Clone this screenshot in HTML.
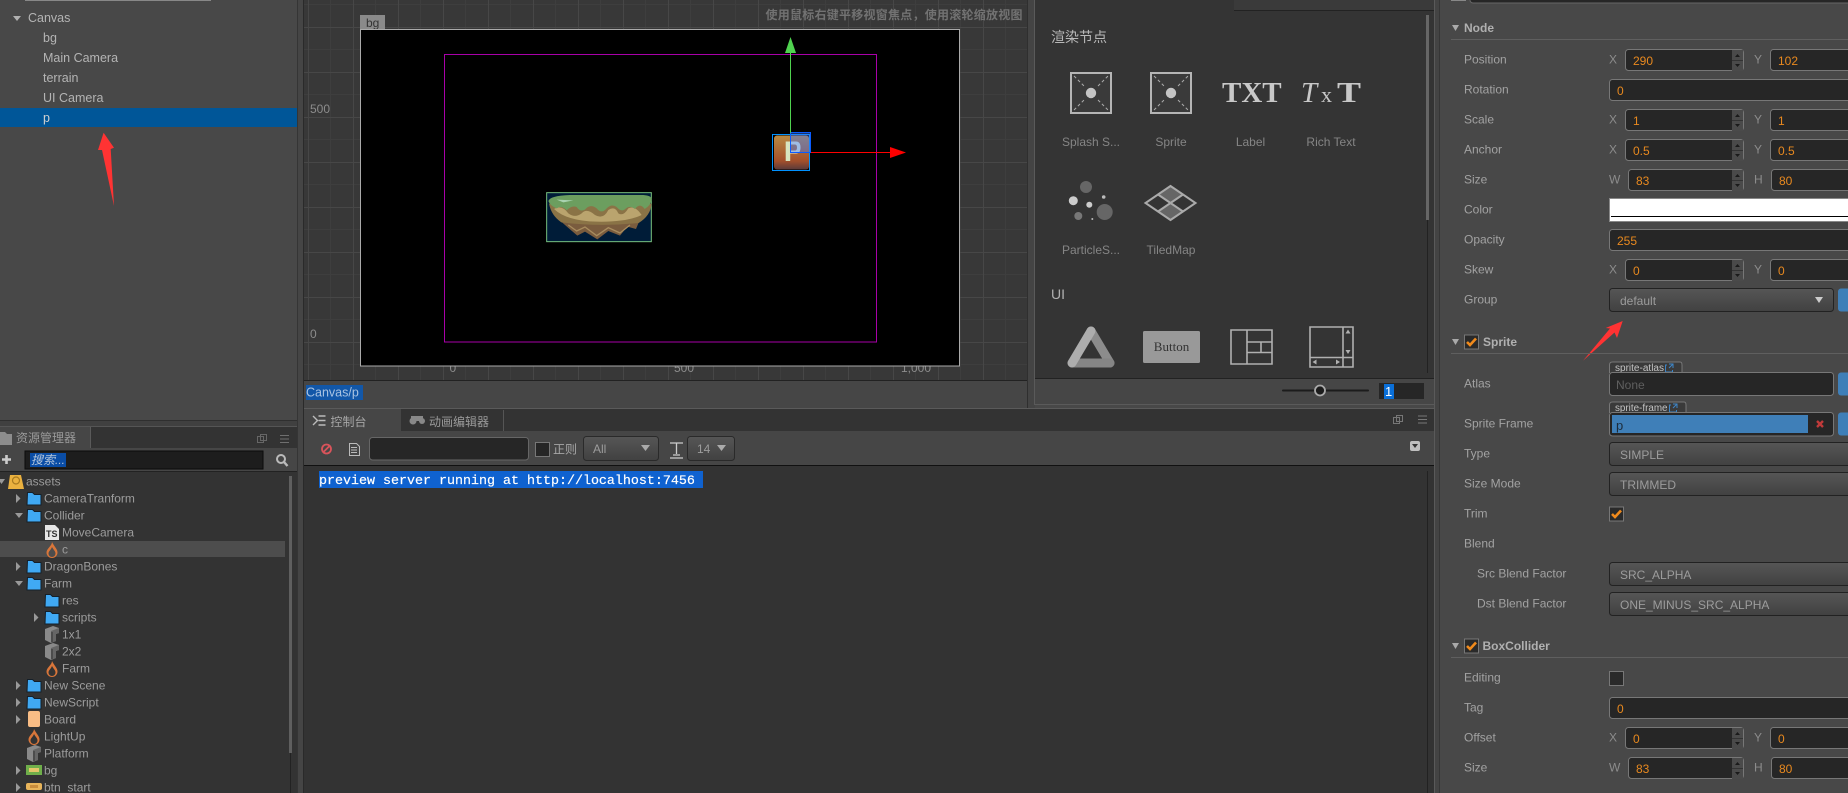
<!DOCTYPE html>
<html lang="zh"><head><meta charset="utf-8"><title>Cocos Creator</title>
<style>
html,body{margin:0;padding:0;background:#484848;width:1848px;height:793px;overflow:hidden}
svg{display:block;font-family:"Liberation Sans","Noto Sans CJK SC",sans-serif;font-size:12px}
.h{font-size:12.5px;fill:#b4b4b4}
.t{fill:#9c9c9c;transform:translateY(-.5px)}
.l{fill:#a2a2a2;transform:translateY(-.5px)}
.o{fill:#e8891f}
.s{fill:#9c9c9c}
.m{fill:#858585;text-anchor:middle}
.b{font-weight:bold;fill:#b0b0b0}
.r{fill:#8c8c8c;transform:translateY(-.5px)}
.c{shape-rendering:crispEdges}
</style></head><body>
<svg width="1848" height="793" viewBox="0 0 1848 793" xmlns="http://www.w3.org/2000/svg">
<defs>
<pattern id="grid" patternUnits="userSpaceOnUse" x="443" y="27" width="45" height="45">
<rect width="45" height="45" fill="#383838"/>
<rect x="22" width="1" height="45" fill="#3e3e3e"/><rect y="22" width="45" height="1" fill="#3e3e3e"/>
<rect width="1" height="45" fill="#474747"/><rect width="45" height="1" fill="#474747"/>
</pattern>
<linearGradient id="sel" x1="0" y1="0" x2="0" y2="1"><stop offset="0" stop-color="#565656"/><stop offset="1" stop-color="#414141"/></linearGradient>
<linearGradient id="brown" x1="0" y1="0" x2="0" y2="1"><stop offset="0" stop-color="#b98a42"/><stop offset=".75" stop-color="#a34f2b"/><stop offset="1" stop-color="#5a3a3a"/></linearGradient>
<symbol id="folder" width="16" height="14" overflow="visible"><path d="M.5 .5h5l2 2h6.500v10.500h-14z" fill="#40a9f3" stroke="#15202a"/></symbol>
<symbol id="fire" width="14" height="18" overflow="visible"><path d="M7 1C7 5 1.500 7.500 1.500 11.500a5.500 5.500 0 0 0 11 0C12.500 8 9.500 6 7 1z M7 6C6 9 3.500 10 3.500 12.500a3.500 3.500 0 0 0 7 0C10.500 10 8.500 9 7 6z" fill="#d9763a" fill-rule="evenodd"/></symbol>
<symbol id="cube" width="15" height="17" overflow="visible"><path d="M0 3L8 0L14 2V7L11 8V15L6 17L0 14z" fill="#8a8a8a"/><path d="M6 5L14 2V7L11 8V15L6 17z" fill="#666"/><path d="M7 6V16" stroke="#333"/></symbol>
<symbol id="spin" width="12" height="21" overflow="visible"><rect x="0" y="0" width="11" height="21" fill="#4a4a4a"/><rect x="0" y="10" width="11" height="1" fill="#333"/><path d="M3 7l2.500-3 2.500 3z M3 14l2.500 3 2.500-3z" fill="#1a1a1a"/></symbol>
<symbol id="chk" width="16" height="16" overflow="visible"><rect x=".5" y=".5" width="14" height="14" fill="#2a2a2a" stroke="#777"/><path d="M3 7.500l3 3L12 4" fill="none" stroke="#f08a1c" stroke-width="2.600"/></symbol>
<symbol id="ph" width="44" height="44" overflow="visible"><rect x="1" y="1" width="40" height="40" fill="#3a3a3a" stroke="#b5b5b5" stroke-width="2"/><circle cx="21" cy="21" r="5.200" fill="#c4c4c4"/><path d="M4 4L14 14M28 14L38 4M4 38L14 28M28 28L38 38" stroke="#aaa" stroke-dasharray="3 2.500"/></symbol>
</defs>

<!-- Hierarchy -->
<rect class="c" x="0" y="0" width="297" height="420" fill="#484848"/>
<rect class="c" x="25" y="0" width="186" height="1" fill="#888"/>
<path d="M13 16h8l-4 5z" fill="#b0b0b0"/>
<text class="h" x="28" y="22">Canvas</text>
<text class="h" x="43" y="42">bg</text>
<text class="h" x="43" y="62">Main Camera</text>
<text class="h" x="43" y="82">terrain</text>
<text class="h" x="43" y="102">UI Camera</text>
<rect class="c" x="0" y="108" width="297" height="19" fill="#005698"/>
<text class="h" x="43" y="122" style="fill:#d0d0d0">p</text>
<path d="M103.600 132.700L114 147.700L110.700 149L114 206L102 150L98 150z" fill="#ff3333"/>

<!-- Dividers -->
<rect class="c" x="297" y="0" width="7" height="793" fill="#454545"/>
<rect class="c" x="297" y="0" width="1" height="793" fill="#353535"/>
<rect class="c" x="303" y="0" width="1" height="793" fill="#2a2a2a"/>
<rect class="c" x="0" y="420" width="297" height="1" fill="#2f2f2f"/>
<rect class="c" x="0" y="421" width="297" height="5" fill="#404040"/>

<!-- Scene -->
<rect class="c" x="304" y="0" width="723" height="380" fill="url(#grid)"/>
<text x="310" y="113" fill="#8c8c8c">500</text>
<text x="310" y="338" fill="#8c8c8c">0</text>
<text x="449.500" y="372" fill="#8c8c8c">0</text>
<text x="674" y="372" fill="#8c8c8c">500</text>
<text x="901" y="372" fill="#8c8c8c">1,000</text>
<rect class="c" x="360" y="15" width="25" height="15" fill="#8a8a8a"/>
<text x="366" y="27" fill="#333">bg</text>
<rect class="c" x="360.500" y="29.500" width="599" height="336.500" fill="#000" stroke="#aaa"/>
<rect class="c" x="444.500" y="54.500" width="432" height="287.500" fill="none" stroke="#a800a8"/>
<text x="765.500" y="19" font-weight="bold" fill="#727272" textLength="257">使用鼠标右键平移视窗焦点，使用滚轮缩放视图</text>

<!-- Island -->
<g transform="translate(540 185) scale(.3333)">
<rect x="20" y="23" width="314" height="147" fill="#001c38" stroke="#77c07f" stroke-width="3"/>
<path d="M58 105L298 108L288 132L262 125L240 152L205 138L172 163L135 140L112 152L84 128z" fill="#7a5c3e"/>
<path d="M85 120L110 138L135 126L170 152L205 128L240 144L270 120" fill="none" stroke="#a88c5e" stroke-width="4"/>
<path d="M27 56L335 56Q332 92 296 114Q180 126 64 112Q34 92 27 56z" fill="#8a7346"/>
<path d="M42 72Q65 58 85 85Q105 100 125 85Q140 68 165 90Q190 105 205 75Q225 62 235 85Q250 95 265 70Q285 60 305 90Q260 112 170 110Q80 108 42 72z" fill="#baa46e"/>
<path d="M25 48Q30 32 90 30L310 30Q336 32 335 44Q332 62 314 72Q300 52 285 72Q270 60 258 70Q245 84 230 66Q215 55 200 70Q185 88 170 70Q150 55 135 74Q120 82 110 66Q95 60 80 76Q65 60 50 70Q30 62 25 48z" fill="#6c9e5f"/>
<path d="M50 44L100 46L70 52z" fill="#a9d3b0"/>
</g>

<!-- P sprite -->
<rect x="774" y="135.500" width="35" height="34" rx="3" fill="url(#brown)"/>
<path d="M785.700 141.500h4.500v19.500h-4.500z" fill="#d8e6bf"/>
<path d="M790 141.500h6q4.500 0 4.500 6t-4.500 6h-6v-3h5q2 0 2-3t-2-3h-5z" fill="#e6efd0"/>
<rect class="c" x="772.500" y="134.500" width="37" height="36" fill="none" stroke="#0091ff"/>
<rect class="c" x="790.500" y="132.500" width="20" height="20" fill="#3c78ff" fill-opacity=".42" stroke="#0a5cff"/>
<rect class="c" x="790" y="50" width="1" height="83" fill="#4fd24f"/>
<path d="M790.500 37L796 53H785z" fill="#4fd24f"/>
<rect class="c" x="811" y="152" width="80" height="1" fill="#f00"/>
<path d="M890 147L906 152.500L890 158z" fill="#f00"/>

<rect class="c" x="304" y="380" width="723" height="1" fill="#222"/>
<rect class="c" x="304" y="381" width="730" height="27" fill="#464646"/>
<rect class="c" x="306" y="385" width="57" height="15" fill="#1257a8"/>
<text x="306" y="396.500" font-size="12.500" fill="#a9c3e2">Canvas/p</text>

<!-- Node library -->
<rect class="c" x="1027" y="0" width="8" height="408" fill="#444"/>
<rect class="c" x="1027" y="0" width="1" height="408" fill="#2f2f2f"/>
<rect class="c" x="1034" y="0" width="1" height="405" fill="#5a5a5a"/>
<rect class="c" x="1035" y="0" width="399" height="378" fill="#343434"/>
<rect class="c" x="1234" y="0" width="200" height="10" fill="#3a3a3a"/>
<rect class="c" x="1234" y="10" width="200" height="1" fill="#222"/>
<rect class="c" x="1035" y="378" width="399" height="26" fill="#464646"/>
<rect class="c" x="1035" y="378" width="399" height="1" fill="#222"/>
<rect class="c" x="1034" y="404" width="401" height="1" fill="#5a5a5a"/>
<rect class="c" x="1427" y="220" width="1" height="153" fill="#222"/>
<rect class="c" x="1426" y="15" width="3" height="205" fill="#666"/>
<text x="1051" y="42" font-size="14" fill="#b8b8b8">渲染节点</text>
<use href="#ph" x="1070" y="72"/>
<use href="#ph" x="1150" y="72"/>
<text x="1222" y="102" font-family="'Liberation Serif',serif" font-weight="bold" font-size="29" fill="#c8c8c8">TXT</text>
<text x="1301" y="102" font-family="'Liberation Serif',serif" font-style="italic" font-size="29" fill="#c8c8c8">T</text>
<text x="1321" y="102" font-family="'Liberation Serif',serif" font-size="22" fill="#c8c8c8">x</text>
<text x="1337" y="102" font-family="'Liberation Serif',serif" font-weight="bold" font-size="29" fill="#c8c8c8" textLength="24" lengthAdjust="spacingAndGlyphs">T</text>
<text class="m" x="1091" y="146">Splash S...</text>
<text class="m" x="1171" y="146">Sprite</text>
<text class="m" x="1250.500" y="146">Label</text>
<text class="m" x="1331" y="146">Rich Text</text>
<g>
<circle cx="1086" cy="187" r="6" fill="#666"/>
<circle cx="1073.300" cy="200.700" r="4.500" fill="#ccc"/>
<circle cx="1089.300" cy="204.700" r="3" fill="#ccc"/>
<circle cx="1103.700" cy="197" r="1.800" fill="#bbb"/>
<circle cx="1104.700" cy="212" r="8" fill="#666"/>
<circle cx="1078.300" cy="216" r="4" fill="#777"/>
<circle cx="1092.300" cy="219" r="1" fill="#bbb"/>
</g>
<path d="M1170.500 186L1182.500 194.500L1170.500 203L1158.500 194.500z M1170.500 203L1182.500 211.500L1170.500 220L1158.500 211.500z" fill="#666"/>
<path d="M1170.500 186L1195.500 203L1170.500 220L1145.500 203zM1158 194.500L1183 211.500M1183 194.500L1158 211.500" fill="none" stroke="#aaa" stroke-width="2"/>
<text class="m" x="1091" y="254">ParticleS...</text>
<text class="m" x="1171" y="254">TiledMap</text>
<text x="1051" y="299" font-size="14" fill="#b0b0b0">UI</text>
<path d="M1091 331L1110 363" stroke="#8c8c8c" stroke-width="9" stroke-linecap="round"/>
<path d="M1072 363L1110 363" stroke="#858585" stroke-width="9" stroke-linecap="round"/>
<path d="M1091 331L1072 363" stroke="#adadad" stroke-width="9" stroke-linecap="round"/>
<rect x="1143" y="331" width="57" height="32" rx="1.500" fill="#999"/>
<text x="1171.500" y="351" text-anchor="middle" font-family="'Liberation Serif',serif" font-size="13" fill="#333">Button</text>
<path d="M1231 330H1272V364H1231zM1247 330V364M1247 342H1272M1247 352.500H1272M1261 342V352.500" fill="none" stroke="#b0b0b0" stroke-width="1.600"/>
<path d="M1310 327H1353V367H1310zM1343 327V367M1310 357.500H1353" fill="none" stroke="#b0b0b0" stroke-width="1.600"/>
<path d="M1348 329.500l2.500 4h-5zM1348 354l2.500-4h-5zM1312.500 362l4-2.500v5zM1340 362l-4-2.500v5z" fill="#b0b0b0"/>
<!-- Zoom slider -->
<rect x="1282" y="389.500" width="87" height="2" rx="1" fill="#1c1c1c"/>
<circle cx="1320" cy="390.500" r="5" fill="#1c1c1c" stroke="#aaa" stroke-width="1.800"/>
<rect class="c" x="1379" y="383" width="45" height="16" fill="#262626"/>
<rect class="c" x="1384" y="384" width="10" height="15" fill="#0a6fd8"/>
<text x="1385" y="396" font-size="13" fill="#fff">1</text>

<!-- Assets panel -->
<rect class="c" x="0" y="426" width="297" height="22" fill="#333"/>
<rect class="c" x="0" y="426" width="297" height="1" fill="#555"/>
<rect class="c" x="0" y="427" width="90" height="21" fill="#464646"/>
<rect class="c" x="90" y="427" width="1" height="21" fill="#5a5a5a"/>
<path d="M0 432H5L7 434H12V445H0z" fill="#8d8d8d"/>
<text x="16" y="442" fill="#9a9a9a">资源管理器</text>
<path d="M257.500 436.500h6v6h-6z M260.500 434.500h6v6h-6z" fill="none" stroke="#666"/>
<path d="M280 435.500h9M280 439h9M280 442.500h9" stroke="#6f6f6f"/>
<rect class="c" x="0" y="448" width="297" height="23" fill="#464646"/>
<path d="M2 459.500h9M6.500 455v9" stroke="#ccc" stroke-width="2.600"/>
<rect class="c" x="25" y="451" width="238" height="18" fill="#1d1d1d" stroke="#0b0b0b"/>
<rect class="c" x="30" y="453" width="36" height="14" fill="#0a4da6"/>
<text x="31" y="464" font-style="italic" fill="#b4c6dc">搜索...</text>
<circle cx="281" cy="459" r="4" fill="none" stroke="#bbb" stroke-width="2"/>
<path d="M284 462l3.500 4" stroke="#bbb" stroke-width="2.400"/>
<rect class="c" x="0" y="471" width="297" height="322" fill="#333"/>
<rect class="c" x="0" y="471" width="297" height="1" fill="#222"/>
<rect class="c" x="0" y="541" width="285" height="16" fill="#4d4d4d"/>
<rect class="c" x="290" y="476" width="1" height="317" fill="#222"/>
<rect class="c" x="289" y="476" width="3" height="277" fill="#5f5f5f"/>

<path d="M-2 479h7l-3.500 5z" fill="#999"/>
<path d="M10 475L21 475L24 489H8z" fill="#eab13f"/><circle cx="16" cy="480.500" r="3.500" fill="#eab13f" stroke="#a87a20" stroke-width="1.200"/>
<text class="t" x="26" y="486">assets</text>
<path d="M16 494l4.500 4.500L16 503z" fill="#999"/><use href="#folder" x="27" y="492"/><text class="t" x="44" y="503">CameraTranform</text>
<path d="M15 513h8l-4 5z" fill="#999"/><use href="#folder" x="27" y="509"/><text class="t" x="44" y="520">Collider</text>
<path d="M45 525h10l4 4v11H45z" fill="#e6e6e6"/><text x="46" y="537" font-size="9" font-weight="bold" fill="#333">TS</text><text class="t" x="62" y="537">MoveCamera</text>
<use href="#fire" x="45" y="541"/><text class="t" x="62" y="554">c</text>
<path d="M16 562l4.500 4.500L16 571z" fill="#999"/><use href="#folder" x="27" y="560"/><text class="t" x="44" y="571">DragonBones</text>
<path d="M15 581h8l-4 5z" fill="#999"/><use href="#folder" x="27" y="577"/><text class="t" x="44" y="588">Farm</text>
<use href="#folder" x="45" y="594"/><text class="t" x="62" y="605">res</text>
<path d="M34 613l4.500 4.500L34 622z" fill="#999"/><use href="#folder" x="45" y="611"/><text class="t" x="62" y="622">scripts</text>
<use href="#cube" x="45" y="626"/><text class="t" x="62" y="639">1x1</text>
<use href="#cube" x="45" y="643"/><text class="t" x="62" y="656">2x2</text>
<use href="#fire" x="45" y="660"/><text class="t" x="62" y="673">Farm</text>
<path d="M16 681l4.500 4.500L16 690z" fill="#999"/><use href="#folder" x="27" y="679"/><text class="t" x="44" y="690">New Scene</text>
<path d="M16 698l4.500 4.500L16 707z" fill="#999"/><use href="#folder" x="27" y="696"/><text class="t" x="44" y="707">NewScript</text>
<path d="M16 715l4.500 4.500L16 724z" fill="#999"/><rect x="28" y="711" width="12" height="16" rx="2" fill="#f9bd85"/><text class="t" x="44" y="724">Board</text>
<use href="#fire" x="27" y="728"/><text class="t" x="44" y="741">LightUp</text>
<use href="#cube" x="27" y="745"/><text class="t" x="44" y="758">Platform</text>
<path d="M16 766l4.500 4.500L16 775z" fill="#999"/><rect x="26" y="765" width="16" height="10" fill="#6fae4a"/><rect x="29" y="768" width="10" height="4" fill="#e4c66a"/><text class="t" x="44" y="775">bg</text>
<path d="M16 783l4.500 4.500L16 792z" fill="#999"/><rect x="26" y="783" width="16" height="7" rx="2" fill="#e8b45a"/><rect x="30" y="785" width="8" height="3" fill="#c98d3c"/><text class="t" x="44" y="792">btn_start</text>

<!-- Console -->
<rect class="c" x="304" y="408" width="1130" height="23" fill="#333"/>
<rect class="c" x="304" y="408" width="1130" height="1" fill="#5a5a5a"/>
<rect class="c" x="304" y="409" width="97" height="22" fill="#464646"/>
<rect class="c" x="401" y="410" width="102" height="21" fill="#333"/>
<rect class="c" x="503" y="410" width="1" height="21" fill="#555"/>
<path d="M313 416l4.500 4.500L313 425" fill="none" stroke="#bbb" stroke-width="1.400"/>
<path d="M318.500 416h7M318.500 420.500h7M318.500 425h7" stroke="#bbb" stroke-width="1.400"/>
<text x="330.500" y="426" fill="#a6a6a6">控制台</text>
<circle cx="413" cy="421" r="3.500" fill="#888"/><circle cx="422" cy="421" r="3" fill="#888"/><rect x="411" y="416" width="12" height="5" fill="#888"/>
<text x="429" y="426" fill="#9a9a9a">动画编辑器</text>
<path d="M1393.500 417.500h6v6h-6z M1396.500 415.500h6v6h-6z" fill="none" stroke="#777"/>
<path d="M1418 416h9M1418 419.500h9M1418 423h9" stroke="#777"/>
<rect class="c" x="304" y="431" width="1130" height="34" fill="#464646"/>
<circle cx="326.500" cy="449" r="4.500" fill="none" stroke="#d9545b" stroke-width="1.800"/>
<path d="M323.500 452l6-6" stroke="#d9545b" stroke-width="1.800"/>
<path d="M349.500 443.500h7l3 3v9h-10z" fill="none" stroke="#bbb"/><path d="M351 447.500h6M351 450h6M351 452.500h6" stroke="#bbb"/>
<rect x="369.500" y="437.500" width="159" height="22.500" rx="3" fill="#262626" stroke="#666"/>
<rect class="c" x="535.500" y="442.500" width="14" height="14" fill="#262626" stroke="#777"/>
<text x="553" y="453.500" fill="#a6a6a6">正则</text>
<rect x="583.500" y="436.500" width="75" height="24" rx="3" fill="url(#sel)" stroke="#2a2a2a"/>
<text class="s" x="593" y="453">All</text>
<path d="M641 445h9l-4.500 6z" fill="#aaa"/>
<path d="M670 443h13M676.500 443v11M673 455h7M670 458h13" fill="none" stroke="#ccc" stroke-width="1.300"/>
<rect x="687.500" y="436.500" width="47" height="24" rx="3" fill="url(#sel)" stroke="#2a2a2a"/>
<text class="s" x="697" y="453">14</text>
<path d="M717 445h9l-4.500 6z" fill="#aaa"/>
<rect x="1410" y="441" width="10" height="10" rx="2" fill="#bfbfbf"/><path d="M1412 444h6l-3 4z" fill="#333"/>
<rect class="c" x="304" y="465" width="1130" height="328" fill="#333"/>
<rect class="c" x="304" y="465" width="1130" height="1" fill="#111"/>
<rect class="c" x="1427" y="471" width="1" height="322" fill="#222"/>
<rect class="c" x="319" y="471" width="384" height="17" fill="#0f62d0"/>
<text x="319" y="484" font-family="'Liberation Mono',monospace" font-size="13.330" fill="#fff" stroke="#fff" stroke-width=".2">preview server running at http://localhost:7456</text>

<!-- Inspector -->
<rect class="c" x="1434" y="0" width="6" height="793" fill="#444"/>
<rect class="c" x="1434" y="0" width="1" height="793" fill="#5a5a5a"/>
<rect class="c" x="1439" y="0" width="1" height="793" fill="#363636"/>
<rect class="c" x="1440" y="0" width="408" height="793" fill="#484848"/>
<rect class="c" x="1451" y="0" width="15" height="1" fill="#888"/>
<rect x="1470" y="-20" width="400" height="23" rx="3" fill="#262626" stroke="#666"/>
<path d="M1452 25h7l-3.500 6z" fill="#aaa"/>
<text class="b" x="1464" y="32">Node</text>
<rect class="c" x="1451" y="39" width="397" height="1" fill="#5f5f5f"/>

<text class="l" x="1464" y="64">Position</text>
<text class="l" x="1464" y="94">Rotation</text>
<text class="l" x="1464" y="124">Scale</text>
<text class="l" x="1464" y="154">Anchor</text>
<text class="l" x="1464" y="184">Size</text>
<text class="l" x="1464" y="214">Color</text>
<text class="l" x="1464" y="244">Opacity</text>
<text class="l" x="1464" y="274">Skew</text>
<text class="l" x="1464" y="304">Group</text>

<text class="r" x="1609" y="64">X</text>
<rect x="1625.500" y="49.500" width="118" height="21" rx="3" fill="#262626" stroke="#777"/><use href="#spin" x="1732" y="50"/>
<text class="o" x="1633" y="65">290</text>
<text class="r" x="1754" y="64">Y</text>
<rect x="1770.500" y="49.500" width="118" height="21" rx="3" fill="#262626" stroke="#777"/>
<text class="o" x="1778" y="65">102</text>

<rect x="1609.500" y="79.500" width="280" height="21" rx="3" fill="#262626" stroke="#777"/>
<text class="o" x="1617" y="95">0</text>

<text class="r" x="1609" y="124">X</text>
<rect x="1625.500" y="109.500" width="118" height="21" rx="3" fill="#262626" stroke="#777"/><use href="#spin" x="1732" y="110"/>
<text class="o" x="1633" y="125">1</text>
<text class="r" x="1754" y="124">Y</text>
<rect x="1770.500" y="109.500" width="118" height="21" rx="3" fill="#262626" stroke="#777"/>
<text class="o" x="1778" y="125">1</text>

<text class="r" x="1609" y="154">X</text>
<rect x="1625.500" y="139.500" width="118" height="21" rx="3" fill="#262626" stroke="#777"/><use href="#spin" x="1732" y="140"/>
<text class="o" x="1633" y="155">0.5</text>
<text class="r" x="1754" y="154">Y</text>
<rect x="1770.500" y="139.500" width="118" height="21" rx="3" fill="#262626" stroke="#777"/>
<text class="o" x="1778" y="155">0.5</text>

<text class="r" x="1609" y="184">W</text>
<rect x="1628.500" y="169.500" width="115" height="21" rx="3" fill="#262626" stroke="#777"/><use href="#spin" x="1732" y="170"/>
<text class="o" x="1636" y="185">83</text>
<text class="r" x="1754" y="184">H</text>
<rect x="1771.500" y="169.500" width="118" height="21" rx="3" fill="#262626" stroke="#777"/>
<text class="o" x="1779" y="185">80</text>

<rect class="c" x="1609.500" y="198.500" width="260" height="23" fill="#fff" stroke="#888"/>
<rect class="c" x="1611" y="216" width="250" height="1" fill="#000"/>

<rect x="1609.500" y="229.500" width="280" height="21" rx="3" fill="#262626" stroke="#777"/>
<text class="o" x="1617" y="245">255</text>

<text class="r" x="1609" y="274">X</text>
<rect x="1625.500" y="259.500" width="118" height="21" rx="3" fill="#262626" stroke="#777"/><use href="#spin" x="1732" y="260"/>
<text class="o" x="1633" y="275">0</text>
<text class="r" x="1754" y="274">Y</text>
<rect x="1770.500" y="259.500" width="118" height="21" rx="3" fill="#262626" stroke="#777"/>
<text class="o" x="1778" y="275">0</text>

<rect x="1609.500" y="288.500" width="224" height="23" rx="3" fill="url(#sel)" stroke="#222"/>
<text class="s" x="1620" y="305">default</text>
<path d="M1815 297h8l-4 6z" fill="#ccc"/>
<rect x="1838" y="288.500" width="30" height="23" rx="3" fill="#3f7fb8"/>

<path d="M1622.700 321L1617 338L1614.500 332.500L1583 360.700L1610 328.500L1605.700 328z" fill="#ff3333"/>

<path d="M1452 339h7l-3.500 6z" fill="#aaa"/>
<use href="#chk" x="1464" y="334.500"/>
<text class="b" x="1483" y="346">Sprite</text>
<rect class="c" x="1451" y="353" width="397" height="1" fill="#5f5f5f"/>

<text class="l" x="1464" y="388">Atlas</text>
<path d="M1609.500 373V365q0-3 3-3H1680q2 0 2 3v8" fill="#3a3a3a" stroke="#777"/>
<text x="1615" y="371" font-size="10" fill="#c4c4c4" textLength="49" lengthAdjust="spacingAndGlyphs">sprite-atlas</text>
<path d="M1667 365h-1.500v7h7v-2M1669 364h4v4M1673 364l-4 4" fill="none" stroke="#3e85c6"/>
<rect x="1609.500" y="372.500" width="224" height="23" rx="3" fill="#262626" stroke="#777"/>
<text x="1616" y="389" font-size="12" fill="#5f5f5f">None</text>
<rect x="1838" y="372.500" width="30" height="23" rx="3" fill="#3f7fb8"/>

<text class="l" x="1464" y="428">Sprite Frame</text>
<path d="M1609.500 413V405q0-3 3-3H1684q2 0 2 3v8" fill="#3a3a3a" stroke="#777"/>
<text x="1615" y="411" font-size="10" fill="#c4c4c4" textLength="52.500" lengthAdjust="spacingAndGlyphs">sprite-frame</text>
<path d="M1671 405h-1.500v7h7v-2M1673 404h4v4M1677 404l-4 4" fill="none" stroke="#3e85c6"/>
<rect x="1609.500" y="412.500" width="224" height="23.500" rx="3" fill="#262626" stroke="#777"/>
<rect class="c" x="1612" y="415" width="196" height="18" fill="#3f7fb8"/>
<text x="1616" y="430" font-size="13" fill="#1c2c3c">p</text>
<path d="M1817 421l6 6M1823 421l-6 6" stroke="#c03a3a" stroke-width="2.400"/>
<rect x="1838" y="412.500" width="30" height="23" rx="3" fill="#3f7fb8"/>

<text class="l" x="1464" y="458">Type</text>
<rect x="1609.500" y="442.500" width="280" height="23" rx="3" fill="url(#sel)" stroke="#222"/>
<text class="s" x="1620" y="459">SIMPLE</text>
<text class="l" x="1464" y="488">Size Mode</text>
<rect x="1609.500" y="472.500" width="280" height="23" rx="3" fill="url(#sel)" stroke="#222"/>
<text class="s" x="1620" y="489">TRIMMED</text>
<text class="l" x="1464" y="518">Trim</text>
<use href="#chk" x="1609" y="506.500"/>
<text class="l" x="1464" y="548">Blend</text>
<text class="l" x="1477" y="578">Src Blend Factor</text>
<rect x="1609.500" y="562.500" width="280" height="23" rx="3" fill="url(#sel)" stroke="#222"/>
<text class="s" x="1620" y="579">SRC_ALPHA</text>
<text class="l" x="1477" y="608">Dst Blend Factor</text>
<rect x="1609.500" y="592.500" width="280" height="23" rx="3" fill="url(#sel)" stroke="#222"/>
<text class="s" x="1620" y="609">ONE_MINUS_SRC_ALPHA</text>

<path d="M1452 643h7l-3.500 6z" fill="#aaa"/>
<use href="#chk" x="1464" y="638.500"/>
<text class="b" x="1482.500" y="650">BoxCollider</text>
<rect class="c" x="1451" y="657" width="397" height="1" fill="#5f5f5f"/>

<text class="l" x="1464" y="682">Editing</text>
<rect class="c" x="1609.500" y="671.500" width="14" height="14" fill="#2a2a2a" stroke="#777"/>
<text class="l" x="1464" y="712">Tag</text>
<rect x="1609.500" y="697.500" width="280" height="21" rx="3" fill="#262626" stroke="#777"/>
<text class="o" x="1617" y="713">0</text>
<text class="l" x="1464" y="742">Offset</text>
<text class="r" x="1609" y="742">X</text>
<rect x="1625.500" y="727.500" width="118" height="21" rx="3" fill="#262626" stroke="#777"/><use href="#spin" x="1732" y="728"/>
<text class="o" x="1633" y="743">0</text>
<text class="r" x="1754" y="742">Y</text>
<rect x="1770.500" y="727.500" width="118" height="21" rx="3" fill="#262626" stroke="#777"/>
<text class="o" x="1778" y="743">0</text>
<text class="l" x="1464" y="772">Size</text>
<text class="r" x="1609" y="772">W</text>
<rect x="1628.500" y="757.500" width="115" height="21" rx="3" fill="#262626" stroke="#777"/><use href="#spin" x="1732" y="758"/>
<text class="o" x="1636" y="773">83</text>
<text class="r" x="1754" y="772">H</text>
<rect x="1771.500" y="757.500" width="118" height="21" rx="3" fill="#262626" stroke="#777"/>
<text class="o" x="1779" y="773">80</text>
</svg>
</body></html>
